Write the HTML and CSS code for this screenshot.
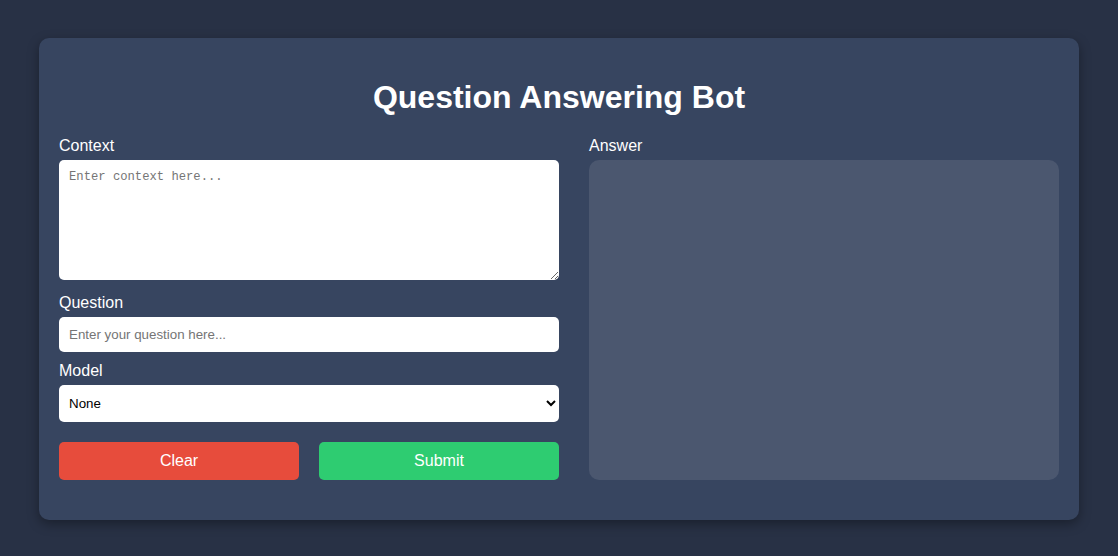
FILE: index.html
```html
<!DOCTYPE html>
<html>
<head>
<meta charset="utf-8">
<title>Question Answering Bot</title>
<link rel="stylesheet" href="styles.css">
</head>
<body>
<div class="container">
  <h1 class="title">Question Answering Bot</h1>
  <div class="layout">
    <div class="left">
      <label class="label" for="context">Context</label>
      <textarea id="context" class="context" placeholder="Enter context here..."></textarea>
      <label class="label" for="question">Question</label>
      <input id="question" class="question" type="text" placeholder="Enter your question here...">
      <label class="label" for="model">Model</label>
      <select id="model" class="model"><option>None</option></select>
      <div class="buttons">
        <button class="btn btn-clear">Clear</button>
        <button class="btn btn-submit">Submit</button>
      </div>
    </div>
    <div class="right">
      <label class="label">Answer</label>
      <div class="answer"></div>
    </div>
  </div>
</div>
</body>
</html>
```
FILE: styles.css
```css
html, body {
  margin: 0;
  padding: 0;
}
body {
  background: #283145;
  font-family: "Liberation Sans", Arial, sans-serif;
  color: #ffffff;
  padding-top: 38px;
  height: 556px;
  box-sizing: border-box;
}
.container {
  width: 1040px;
  margin: 0 auto;
  box-sizing: border-box;
  background: #374560;
  border-radius: 10px;
  padding: 20px 20px 40px;
  box-shadow: 0 4px 12px rgba(0, 0, 0, 0.35);
}
.title {
  font-size: 32px;
  font-weight: bold;
  text-align: center;
  margin: 21px 0 20px;
  line-height: 37px;
}
.layout {
  display: grid;
  grid-template-columns: 500px 470px;
  column-gap: 30px;
}
.left, .right {
  display: flex;
  flex-direction: column;
}
.label {
  display: block;
  font-size: 16px;
  line-height: 18px;
  padding-top: 1px;
  margin-bottom: 5px;
}
.context {
  display: block;
  box-sizing: border-box;
  width: 100%;
  height: 120px;
  border: none;
  border-radius: 5px;
  padding: 10px;
  font-family: "Liberation Mono", monospace;
  font-size: 12.2px;
  background: #ffffff;
  margin: 0 0 13px;
  outline: none;
}
.context::placeholder {
  color: #757575;
}
.question {
  display: block;
  box-sizing: border-box;
  width: 100%;
  height: 35px;
  border: none;
  border-radius: 5px;
  padding: 10px;
  font-family: "Liberation Sans", Arial, sans-serif;
  font-size: 13.33px;
  margin: 0 0 9px;
  background: #ffffff;
}
.question::placeholder {
  color: #757575;
}
.model {
  display: block;
  box-sizing: border-box;
  width: 100%;
  height: 37px;
  border: none;
  border-radius: 5px;
  padding: 0 6px;
  font-family: "Liberation Sans", Arial, sans-serif;
  font-size: 13.33px;
  color: #000000;
  background: #ffffff;
  margin: 0;
}
.buttons {
  display: flex;
  gap: 20px;
  margin-top: 20px;
}
.btn {
  flex: 1;
  height: 38px;
  border: none;
  border-radius: 5px;
  color: #ffffff;
  font-family: "Liberation Sans", Arial, sans-serif;
  font-size: 16px;
  padding: 0;
}
.btn-clear {
  background: #e74c3c;
}
.btn-submit {
  background: #2ecc71;
}
.answer {
  flex: 1;
  background: #4b576f;
  border-radius: 10px;
}
```
